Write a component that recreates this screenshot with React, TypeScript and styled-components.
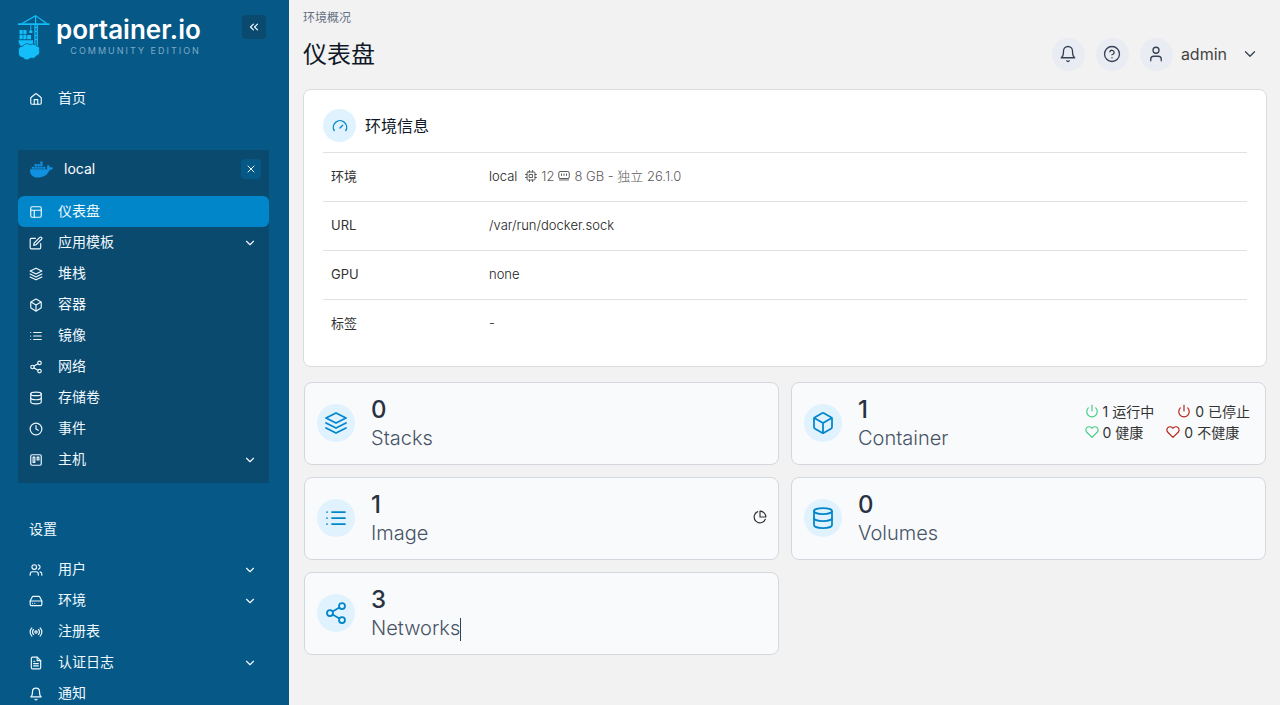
import React from "react";
import styled, { createGlobalStyle } from "styled-components";
import { FaDocker } from "react-icons/fa";

const GlobalStyle = createGlobalStyle`
  *, *::before, *::after { box-sizing: border-box; }
  body {
    margin: 0;
    background: #f2f2f2;
    color: #333;
    font-family: Inter, "Noto Sans CJK SC", sans-serif;
    font-size: 14px;
    line-height: 20px;
  }
  a { color: inherit; text-decoration: none; }
  button { font: inherit; color: inherit; border: 0; padding: 0; cursor: pointer; }
`;

/* ---------- icons ---------- */

const shapes: Record<string, React.ReactNode> = {
  home: (
    <>
      <path d="M3 10.5a2 2 0 0 1 .8-1.6l7-5.6a2 2 0 0 1 2.4 0l7 5.6a2 2 0 0 1 .8 1.6V19a2 2 0 0 1-2 2H5a2 2 0 0 1-2-2z" />
      <path d="M9 21v-8h6v8" />
    </>
  ),
  layout: (
    <>
      <rect x="3" y="3" width="18" height="18" rx="2" />
      <path d="M3 9h18M9 21V9" />
    </>
  ),
  edit: (
    <>
      <path d="M11 4H4a2 2 0 0 0-2 2v14a2 2 0 0 0 2 2h14a2 2 0 0 0 2-2v-7" />
      <path d="M18.5 2.5a2.121 2.121 0 0 1 3 3L12 15l-4 1 1-4 9.500-9.500z" />
    </>
  ),
  layers: <path d="M12 2 2 7l10 5 10-5-10-5zM2 17l10 5 10-5M2 12l10 5 10-5" />,
  box: (
    <>
      <path d="M21 16V8a2 2 0 0 0-1-1.730l-7-4a2 2 0 0 0-2 0l-7 4A2 2 0 0 0 3 8v8a2 2 0 0 0 1 1.730l7 4a2 2 0 0 0 2 0l7-4A2 2 0 0 0 21 16z" />
      <path d="M3.270 6.960 12 12.010l8.730-5.050M12 22.080V12" />
    </>
  ),
  list: <path d="M8 6h13M8 12h13M8 18h13M3 6h.01M3 12h.01M3 18h.01" />,
  share: (
    <>
      <circle cx="18" cy="5" r="3" />
      <circle cx="6" cy="12" r="3" />
      <circle cx="18" cy="19" r="3" />
      <path d="m8.590 13.510 6.830 3.980M15.410 6.510l-6.820 3.980" />
    </>
  ),
  database: (
    <>
      <ellipse cx="12" cy="5" rx="9" ry="3" />
      <path d="M21 12c0 1.660-4 3-9 3s-9-1.340-9-3" />
      <path d="M3 5v14c0 1.660 4 3 9 3s9-1.340 9-3V5" />
    </>
  ),
  clock: (
    <>
      <circle cx="12" cy="12" r="10" />
      <path d="M12 6v6l4 2" />
    </>
  ),
  board: (
    <>
      <rect x="3" y="3" width="18" height="18" rx="2" />
      <rect x="7" y="7" width="3" height="9" />
      <rect x="14" y="7" width="3" height="5" />
    </>
  ),
  users: (
    <>
      <path d="M16 21v-2a4 4 0 0 0-4-4H6a4 4 0 0 0-4 4v2" />
      <circle cx="9" cy="7" r="4" />
      <path d="M22 21v-2a4 4 0 0 0-3-3.870M16 3.130a4 4 0 0 1 0 7.750" />
    </>
  ),
  drive: (
    <>
      <path d="M22 12H2M6 16h.01M10 16h.01" />
      <path d="M5.450 5.110 2 12v6a2 2 0 0 0 2 2h16a2 2 0 0 0 2-2v-6l-3.450-6.890A2 2 0 0 0 16.760 4H7.240a2 2 0 0 0-1.790 1.110z" />
    </>
  ),
  radio: (
    <>
      <circle cx="12" cy="12" r="2" />
      <path d="M16.240 7.760a6 6 0 0 1 0 8.490M7.760 16.240a6 6 0 0 1 0-8.490M19.070 4.930a10 10 0 0 1 0 14.140M4.930 19.070a10 10 0 0 1 0-14.140" />
    </>
  ),
  file: (
    <>
      <path d="M14 2H6a2 2 0 0 0-2 2v16a2 2 0 0 0 2 2h12a2 2 0 0 0 2-2V8z" />
      <path d="M14 2v6h6M16 13H8M16 17H8M10 9H8" />
    </>
  ),
  bell: (
    <>
      <path d="M6 8a6 6 0 0 1 12 0c0 7 3 9 3 9H3s3-2 3-9" />
      <path d="M10.300 21a1.940 1.940 0 0 0 3.400 0" />
    </>
  ),
  help: (
    <>
      <circle cx="12" cy="12" r="10" />
      <path d="M9.090 9a3 3 0 0 1 5.830 1c0 2-3 3-3 3M12 17h.01" />
    </>
  ),
  user: (
    <>
      <path d="M19 21v-2a4 4 0 0 0-4-4H9a4 4 0 0 0-4 4v2" />
      <circle cx="12" cy="7" r="4" />
    </>
  ),
  down: <path d="m6 9 6 6 6-6" />,
  collapse: <path d="m11 17-5-5 5-5M18 17l-5-5 5-5" />,
  close: <path d="M18 6 6 18M6 6l12 12" />,
  gauge: (
    <>
      <path d="m12 15 4-4" />
      <path d="M3.340 19a10 10 0 1 1 17.320 0" />
    </>
  ),
  cpu: (
    <>
      <rect x="4" y="4" width="16" height="16" rx="2" />
      <rect x="9" y="9" width="6" height="6" />
      <path d="M9 1v3M15 1v3M9 20v3M15 20v3M20 9h3M20 15h3M1 9h3M1 15h3" />
    </>
  ),
  memory: (
    <>
      <rect x="1.500" y="3" width="21" height="14" rx="3" />
      <path d="M7 8v3M12 8v3M17 8v3M4 17v4M8 17v4M12 17v4M16 17v4M20 17v4" />
    </>
  ),
  pie: (
    <>
      <path d="M21.210 15.890A10 10 0 1 1 8 2.830" />
      <path d="M22 12A10 10 0 0 0 12 2v10z" />
    </>
  ),
  power: <path d="M18.360 6.640a9 9 0 1 1-12.730 0M12 2v10" />,
  heart: (
    <path d="M20.840 4.610a5.500 5.500 0 0 0-7.780 0L12 5.670l-1.060-1.060a5.500 5.500 0 0 0-7.780 7.780L12 21.230l8.840-8.840a5.500 5.500 0 0 0 0-7.780z" />
  ),
};

const Svg = styled.svg`
  display: block;
  flex: none;
  fill: none;
  stroke: currentColor;
  stroke-linecap: round;
  stroke-linejoin: round;
`;

function Icon({ name, size = 14 }: { name: string; size?: number }) {
  return (
    <Svg
      width={size}
      height={size}
      viewBox="0 0 24 24"
      strokeWidth={size > 16 ? 1.75 : 2}
      aria-hidden="true"
    >
      {shapes[name]}
    </Svg>
  );
}

function Crane() {
  return (
    <svg width="32" height="46" viewBox="0 0 32 46" fill="#13bef9" aria-hidden="true">
      <path d="M0 8.300h31.500v1.700H0z" />
      <path d="M17.500 0 3 8.500h2.400L17 1.800V9h1.200V1.800L27.500 8.500h2.300z" />
      <path d="M16.300 9h1.300v22h-1.300zM18.600 9h1.300v22h-1.300z" />
      <path d="M17 12h2v1h-2zM17 16h2v1h-2zM17 20h2v1h-2zM17 24h2v1h-2z" />
      <path d="M12.400 9.500h.9v5h-.9z" />
      <path d="m10.800 17 2-3 2 3-.8 1h-2.400z" />
      <path d="M1.500 15h3.200v4.200H1.500zM5.300 15h3.200v4.200H5.300zM1.500 20h3.200v4.200H1.500zM5.300 20h3.200v4.200H5.300zM9.200 20h3.800v4.200H9.200z" />
      <path d="M.5 25.200h14.500v6H3c-1.500-1.500-2.500-3.500-2.500-6z" />
      <path
        d="M5 31c1.500-2.500 5-3 7-1.200 2.500-1.500 5.500-.8 6.500 1 2.500.3 3.500 2.400 2.800 4.400 1.200 2.500-.3 5-2.800 5.600-1 2.500-4 3-6 2.200-2 2.600-6 2.400-7.200-.2C2 42.500-.3 40 .6 37-.5 34 2 31 5 31z"
        stroke="#065986"
        strokeWidth="0.800"
      />
    </svg>
  );
}

/* ---------- sidebar ---------- */

const Page = styled.div`
  display: flex;
  align-items: flex-start;
  min-height: 100vh;
`;

const Sidebar = styled.nav`
  position: sticky;
  top: 0;
  flex: none;
  width: 289px;
  height: 100vh;
  overflow-y: auto;
  scrollbar-width: none;
  padding: 15px 20px 14px 18px;
  background: #065986;
  color: #f0f9ff;
`;

const Brand = styled.header`
  display: flex;
  align-items: flex-start;
  justify-content: space-between;
  height: 68px;
  padding-right: 3px;
`;

const Logo = styled.a`
  display: flex;
  gap: 6px;
  color: #fff;
`;

const LogoText = styled.span`
  display: flex;
  flex-direction: column;
  align-items: flex-end;
`;

const LogoName = styled.span`
  font-size: 26px;
  font-weight: 600;
  line-height: 30px;
`;

const LogoEdition = styled.span`
  font-size: 9px;
  line-height: 11px;
  letter-spacing: 2px;
  color: #7fa9c6;
`;

const SquareButton = styled.button<{ $size: number; $bg: string }>`
  display: grid;
  place-items: center;
  width: ${(p) => p.$size}px;
  height: ${(p) => p.$size}px;
  border-radius: 4px;
  background: ${(p) => p.$bg};
`;

const Menu = styled.ul`
  list-style: none;
  margin: 0;
  padding: 0;
`;

const MenuLink = styled.a<{ $active?: boolean }>`
  display: flex;
  align-items: center;
  height: 31px;
  padding: 0 12px 0 11px;
  border-radius: 6px;
  background: ${(p) => (p.$active ? "#0086c9" : "transparent")};
`;

const MenuLabel = styled.span`
  flex: 1;
  margin-left: 15px;
  padding-bottom: 1px;
`;

const EnvPanel = styled.section`
  margin-top: 36px;
  padding-bottom: 8px;
  background: #0b4a6f;
`;

const EnvHead = styled.div`
  display: flex;
  align-items: center;
  gap: 11px;
  height: 38px;
  padding: 0 8px 0 12px;
  margin-bottom: 8px;
`;

const EnvName = styled.span`
  flex: 1;
  color: #fff;
`;

const SectionTitle = styled.h2`
  margin: 36px 0 15px;
  padding-left: 11px;
  font-size: 14px;
  font-weight: 400;
  line-height: 20px;
`;

type Item = { icon: string; label: string; active?: boolean; expandable?: boolean };

const envItems: Item[] = [
  { icon: "layout", label: "仪表盘", active: true },
  { icon: "edit", label: "应用模板", expandable: true },
  { icon: "layers", label: "堆栈" },
  { icon: "box", label: "容器" },
  { icon: "list", label: "镜像" },
  { icon: "share", label: "网络" },
  { icon: "database", label: "存储卷" },
  { icon: "clock", label: "事件" },
  { icon: "board", label: "主机", expandable: true },
];

const settingsItems: Item[] = [
  { icon: "users", label: "用户", expandable: true },
  { icon: "drive", label: "环境", expandable: true },
  { icon: "radio", label: "注册表" },
  { icon: "file", label: "认证日志", expandable: true },
  { icon: "bell", label: "通知" },
];

function MenuList({ items }: { items: Item[] }) {
  return (
    <Menu>
      {items.map((item) => (
        <li key={item.label}>
          <MenuLink href="#" $active={item.active} aria-current={item.active ? "page" : undefined}>
            <Icon name={item.icon} />
            <MenuLabel>{item.label}</MenuLabel>
            {item.expandable && <Icon name="down" />}
          </MenuLink>
        </li>
      ))}
    </Menu>
  );
}

/* ---------- main ---------- */

const Main = styled.main`
  flex: 1;
  min-width: 0;
  padding: 9px 13px 24px 14px;
`;

const Breadcrumb = styled.a`
  display: block;
  font-size: 12px;
  line-height: 18px;
  color: #667085;
`;

const TopBar = styled.header`
  display: flex;
  align-items: center;
  justify-content: space-between;
  height: 54px;
  margin-bottom: 8px;
`;

const Title = styled.h1`
  margin: 0;
  padding-top: 2px;
  font-size: 24px;
  font-weight: 400;
  line-height: 32px;
  color: #101828;
`;

const Actions = styled.div`
  display: flex;
  align-items: center;
  gap: 11px;
  padding-right: 8px;
  color: #344054;
`;

const Round = styled.span<{ $size: number; $bg: string }>`
  display: grid;
  place-items: center;
  flex: none;
  width: ${(p) => p.$size}px;
  height: ${(p) => p.$size}px;
  border-radius: 50%;
  background: ${(p) => p.$bg};
`;

const ActionButton = styled.button`
  display: flex;
  align-items: center;
  background: none;
`;

const UserName = styled.span`
  margin: 0 14px 0 8px;
  font-size: 16px;
  color: #444;
`;

const Card = styled.section`
  padding: 19px 19px 18px;
  border: 1px solid #d9dce1;
  border-radius: 8px;
  background: #fff;
`;

const CardHead = styled.div`
  display: flex;
  align-items: center;
  gap: 9px;
  height: 33px;
  margin-bottom: 10px;
  color: #0086c9;
`;

const CardTitle = styled.h2`
  margin: 0;
  font-size: 16px;
  font-weight: 400;
  color: #101828;
`;

const InfoTable = styled.table`
  width: 100%;
  border-collapse: separate;
  border-spacing: 0;
  font-size: 13px;
  color: #333;
  th, td {
    height: 49px;
    padding: 0 8px 2px;
    border-top: 1px solid #dfe1e4;
    font-weight: 400;
    text-align: left;
  }
  th { width: 158px; }
  td { font-weight: 300; color: #1a1a1a; }
`;

const EnvValue = styled.span`
  display: flex;
  align-items: center;
  gap: 4px;
`;

const Muted = styled.span`
  display: flex;
  align-items: center;
  gap: 4px;
  margin-left: 4px;
  color: #5c5c5c;
`;

const Tiles = styled.div`
  display: grid;
  grid-template-columns: 1fr 1fr;
  gap: 12px;
  padding: 15px 1px 0;
`;

const Tile = styled.a`
  display: flex;
  align-items: center;
  gap: 16px;
  height: 83px;
  padding: 0 11px 2px 12px;
  border: 1px solid #d4d8de;
  border-radius: 8px;
  background: #f9fafb;
  color: #0086c9;
`;

const TileText = styled.span`
  flex: 1;
  display: flex;
  flex-direction: column;
  padding-top: 3px;
  line-height: 28px;
`;

const TileCount = styled.span`
  font-size: 24px;
  font-weight: 500;
  color: #293241;
`;

const TileLabel = styled.span`
  align-self: flex-start;
  font-size: 20px;
  font-weight: 300;
  color: #475467;
`;

const Caret = styled.span`
  display: inline-block;
  width: 1px;
  height: 23px;
  vertical-align: middle;
  background: #344054;
`;

const TileExtra = styled.span`
  padding-bottom: 2px;
  color: #333;
`;

const StatusGrid = styled.span`
  display: flex;
  flex-direction: column;
  padding: 0 4px 2px 0;
  color: #333;
`;

const StatusRow = styled.span`
  display: flex;
  gap: 23px;
  line-height: 21px;
`;

const Status = styled.span<{ $color: string }>`
  display: flex;
  align-items: center;
  gap: 4px;
  svg { color: ${(p) => p.$color}; }
`;

const green = "#47cd89";
const red = "#b42318";

function StatTile(props: {
  icon: string;
  count: number;
  label: string;
  caret?: boolean;
  children?: React.ReactNode;
}) {
  return (
    <Tile href="#">
      <Round $size={38} $bg="#e0f2fe">
        <Icon name={props.icon} size={24} />
      </Round>
      <TileText>
        <TileCount>{props.count}</TileCount>
        <TileLabel>
          {props.label}
          {props.caret && <Caret />}
        </TileLabel>
      </TileText>
      {props.children}
    </Tile>
  );
}

export default function App() {
  return (
    <>
      <GlobalStyle />
      <Page>
        <Sidebar>
          <Brand>
            <Logo href="#">
              <Crane />
              <LogoText>
                <LogoName>portainer.io</LogoName>
                <LogoEdition>COMMUNITY EDITION</LogoEdition>
              </LogoText>
            </Logo>
            <SquareButton $size={24} $bg="#0b4a6f" aria-label="收起侧栏">
              <Icon name="collapse" />
            </SquareButton>
          </Brand>
          <MenuList items={[{ icon: "home", label: "首页" }]} />
          <EnvPanel>
            <EnvHead>
              <FaDocker size={23} color="#1090e0" aria-hidden="true" />
              <EnvName>local</EnvName>
              <SquareButton $size={20} $bg="#065986" aria-label="关闭环境">
                <Icon name="close" size={12} />
              </SquareButton>
            </EnvHead>
            <MenuList items={envItems} />
          </EnvPanel>
          <SectionTitle>设置</SectionTitle>
          <MenuList items={settingsItems} />
        </Sidebar>

        <Main>
          <Breadcrumb href="#">环境概况</Breadcrumb>
          <TopBar>
            <Title>仪表盘</Title>
            <Actions>
              <ActionButton aria-label="通知">
                <Round $size={33} $bg="#eaecf3">
                  <Icon name="bell" size={18} />
                </Round>
              </ActionButton>
              <ActionButton aria-label="帮助">
                <Round $size={33} $bg="#eaecf3">
                  <Icon name="help" size={18} />
                </Round>
              </ActionButton>
              <ActionButton>
                <Round $size={33} $bg="#eaecf3">
                  <Icon name="user" size={18} />
                </Round>
                <UserName>admin</UserName>
                <Icon name="down" size={18} />
              </ActionButton>
            </Actions>
          </TopBar>

          <Card>
            <CardHead>
              <Round $size={33} $bg="#e0f2fe">
                <Icon name="gauge" size={16} />
              </Round>
              <CardTitle>环境信息</CardTitle>
            </CardHead>
            <InfoTable>
              <tbody>
                <tr>
                  <th scope="row">环境</th>
                  <td>
                    <EnvValue>
                      local
                      <Muted>
                        <Icon name="cpu" size={12} />
                        12
                        <Icon name="memory" size={12} />
                        8 GB - 独立 26.1.0
                      </Muted>
                    </EnvValue>
                  </td>
                </tr>
                <tr>
                  <th scope="row">URL</th>
                  <td>/var/run/docker.sock</td>
                </tr>
                <tr>
                  <th scope="row">GPU</th>
                  <td>none</td>
                </tr>
                <tr>
                  <th scope="row">标签</th>
                  <td>-</td>
                </tr>
              </tbody>
            </InfoTable>
          </Card>

          <Tiles>
            <StatTile icon="layers" count={0} label="Stacks" />
            <StatTile icon="box" count={1} label="Container">
              <StatusGrid>
                <StatusRow>
                  <Status $color={green}><Icon name="power" />1 运行中</Status>
                  <Status $color={red}><Icon name="power" />0 已停止</Status>
                </StatusRow>
                <StatusRow>
                  <Status $color={green}><Icon name="heart" />0 健康</Status>
                  <Status $color={red}><Icon name="heart" />0 不健康</Status>
                </StatusRow>
              </StatusGrid>
            </StatTile>
            <StatTile icon="list" count={1} label="Image">
              <TileExtra><Icon name="pie" /></TileExtra>
            </StatTile>
            <StatTile icon="database" count={0} label="Volumes" />
            <StatTile icon="share" count={3} label="Networks" caret />
          </Tiles>
        </Main>
      </Page>
    </>
  );
}
